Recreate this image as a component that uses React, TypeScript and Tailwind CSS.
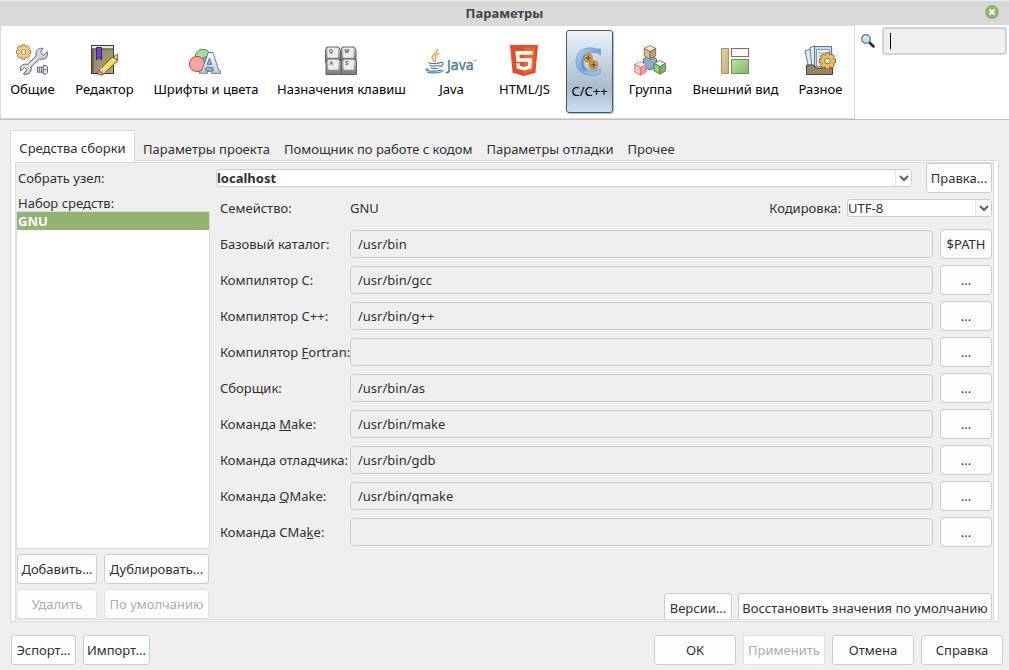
import React, { useState } from "react";

function Cog({ cx, cy, r, hole, fill, stroke }: { cx: number; cy: number; r: number; hole: number; fill: string; stroke: string }) {
  const teeth = 8;
  const pts: string[] = [];
  for (let i = 0; i < teeth; i++) {
    const base = (i / teeth) * Math.PI * 2;
    const steps: [number, number][] = [[-0.34, r * 0.76], [-0.22, r], [0.22, r], [0.34, r * 0.76]];
    steps.forEach(([a, d]) => pts.push(`${(cx + Math.cos(base + a) * d).toFixed(2)},${(cy + Math.sin(base + a) * d).toFixed(2)}`));
  }
  return (
    <g>
      <polygon points={pts.join(" ")} fill={fill} stroke={stroke} strokeWidth="1" strokeLinejoin="round" />
      <circle cx={cx} cy={cy} r={hole} fill="#fff" stroke={stroke} strokeWidth="1" />
    </g>
  );
}

function GeneralIcon() {
  return (
    <svg width="32" height="32" viewBox="0 0 32 32" aria-hidden="true">
      <defs>
        <linearGradient id="wrench" x1="0" y1="0" x2="1" y2="1">
          <stop offset="0" stopColor="#fbfcfd" />
          <stop offset="1" stopColor="#aab4be" />
        </linearGradient>
      </defs>
      <Cog cx={7.5} cy={8} r={7.4} hole={2.4} fill="#f2cd88" stroke="#b67f33" />
      <path d="M27 4.4C23.6 3.600 19.800 5.800 20 10L20.200 12 11.800 20.300 9.500 20.200C6 20 3.600 23 4.600 27L8.300 23.600 10.900 25.700 7.400 29.900C11.500 31.500 15.600 28.300 15.200 24.200L15.100 23 23.600 15 26 15.200C30.200 15.400 32.500 11.500 31.200 7.800L27.700 11.200 24.500 8.300Z" fill="url(#wrench)" stroke="#5c6670" strokeWidth="1" strokeLinejoin="round" />
      <path d="M12.500 22 22 12.800" stroke="#fff" strokeWidth="1" />
      <rect x="21.5" y="23.200" width="6" height="5" fill="#cfd6dd" stroke="#66717c" />
      <path d="M23.500 23v5M25.500 23v5" stroke="#7c8791" />
      <path d="M27.300 21.500h2.800l1.400 1.500v5.500l-1.400 1.500h-2.800z" fill="#dfe5ea" stroke="#5f6a75" />
      <path d="M27.500 25.600h4" stroke="#7c8791" />
    </svg>
  );
}

function EditorIcon() {
  return (
    <svg width="32" height="32" viewBox="0 0 32 32" aria-hidden="true">
      <defs>
        <linearGradient id="book" x1="0" y1="0" x2="1" y2="1">
          <stop offset="0" stopColor="#877f5e" />
          <stop offset="1" stopColor="#b0a881" />
        </linearGradient>
      </defs>
      <rect x="3.5" y="1.5" width="22" height="28" fill="url(#book)" stroke="#423a25" />
      <path d="M4 2h21v2.5H4z" fill="#e8e8e0" />
      <path d="M3.5 5h22" stroke="#5c5238" />
      <path d="M5 5v24" stroke="#71694b" strokeWidth="2" />
      <path d="M8.5 3.5h5V16L11 13.2 8.5 16z" fill="#6e46c9" stroke="#371b83" />
      <path d="M26.8 12.2 29.5 14.5 29 17.5 15.5 30 10.5 29.5 10.8 26.6 23 14z" fill="#f7cf52" stroke="#73521b" strokeLinejoin="round" />
      <path d="M14 27 26.3 15.2" stroke="#fff0a1" strokeWidth="1.6" />
      <path d="M10.5 26 15.5 30.2C13.5 31.8 9.5 31 9.5 28z" fill="#ef8f94" stroke="#9f3c42" />
      <path d="M12.5 24.5 17 28.6" stroke="#ccd2d8" strokeWidth="1.8" />
      <path d="m25 13.3 4.8-3.3-.8 5.8z" fill="#ecd0a1" stroke="#4d3518" strokeWidth=".7" />
    </svg>
  );
}

function FontsIcon() {
  return (
    <svg width="32" height="32" viewBox="0 0 32 32" aria-hidden="true">
      <defs>
        <linearGradient id="glyph" x1="0" y1="0" x2="0" y2="1">
          <stop offset="0" stopColor="#ffffff" />
          <stop offset="1" stopColor="#c4ccd4" />
        </linearGradient>
      </defs>
      <circle cx="14" cy="13" r="7.8" fill="#a8dc93" stroke="#4c9644" />
      <circle cx="19" cy="20" r="7.6" fill="#7cb2e0" stroke="#3e76ab" />
      <circle cx="8" cy="20" r="7.6" fill="#f8a5a1" stroke="#c2463f" />
      <path d="M10.5 29.3v-2.2l2.2-.5L19.3 8.5h4.6l6 18.1 1.9.5v2.2h-9.2v-2.2l2-.5-1.1-3.4h-6.2l-1.2 3.4 2.3.5v2.2zM18.2 20.4h4.4L20.5 14z" fill="url(#glyph)" stroke="#5d7082" strokeWidth=".9" fillRule="evenodd" />
    </svg>
  );
}

function KeysIcon() {
  const keys = [
    { x: 0, y: 3, c: "Q" },
    { x: 15.5, y: 3, c: "W" },
    { x: 0.5, y: 15, c: "A" },
    { x: 16, y: 15, c: "S" },
  ];
  return (
    <svg width="32" height="32" viewBox="0 0 32 32" aria-hidden="true">
      <defs>
        <linearGradient id="key" x1="0" y1="0" x2="0" y2="1">
          <stop offset="0" stopColor="#c9c9cc" />
          <stop offset="1" stopColor="#77787b" />
        </linearGradient>
      </defs>
      {keys.map((k) => (
        <g key={k.c}>
          <path d={`M${k.x + 2} ${k.y}h11.500l2 3v12.500h-15v-12.500z`} fill="url(#key)" stroke="#606164" strokeLinejoin="round" />
          <rect x={k.x + 2.6} y={k.y + 0.8} width="10.4" height="10" rx="1" fill="#ececee" />
          <text x={k.x + 4} y={k.y + 6.4} fontSize="5" fontWeight="700" fontFamily="Liberation Sans, sans-serif" fill="#56575a">{k.c}</text>
        </g>
      ))}
    </svg>
  );
}

function JavaIcon() {
  return (
    <svg width="52" height="32" viewBox="0 0 52 32" aria-hidden="true">
      <path d="M12.200 5.500c1 3.200-5.100 4.900-5.100 8 0 1.800 1.300 2.600 2.200 4.100M14 9.500c-3.400 1.300-5 2.700-3.500 4.600 1 1.400.5 2.300-.5 3.500" fill="none" stroke="#ef9430" strokeWidth="1.300" strokeLinecap="round" />
      <path d="M4.200 18.500c-1.800 1.300 8 1.400 11.200.1M5 21.200c.8 1.200 6.600 1.100 9.200.1M6 23.800c1.200 1 5 1 7.200.2M14.800 18.600c4.500-1.200 4.200 3-.1 4.100M3.200 24.800c-7 1.800 4.400 3.300 12.700 1.600M2.800 28.300c7 1 13.400.3 15.200-1.600" fill="none" stroke="#557fa2" strokeWidth="1.200" strokeLinecap="round" />
      <text x="22" y="26" fontSize="14" fontFamily="Noto Sans, sans-serif" fill="#4f7d9f" stroke="#4f7d9f" strokeWidth=".4">Java</text>
      <path d="M49 16.500h2.500" stroke="#7fa0b8" />
    </svg>
  );
}

function HtmlIcon() {
  return (
    <svg width="32" height="32" viewBox="0 0 32 32" aria-hidden="true">
      <path d="M2 1h28l-2.6 27.8L16 32 4.6 28.8z" fill="#e44d26" />
      <path d="M16 3.3h11.5l-2.2 23.8L16 29.7z" fill="#f16529" />
      <path d="M7.3 7h17.5l-.3 3.8H11.4l.3 3.4h12.5l-1 10.3L16 26.6l-7.2-2.1-.5-5.2h3.5l.3 2.5 3.9 1.1 3.9-1.1.5-4H8.4z" fill="#fff" />
    </svg>
  );
}

function CppIcon() {
  return (
    <svg width="32" height="32" viewBox="0 0 32 32" aria-hidden="true">
      <defs>
        <linearGradient id="cring" x1="0" y1="0" x2="1" y2="1">
          <stop offset="0" stopColor="#b5d8fb" />
          <stop offset=".5" stopColor="#73a5da" />
          <stop offset="1" stopColor="#a4cdf5" />
        </linearGradient>
        <radialGradient id="gold">
          <stop offset="0" stopColor="#ffda7e" />
          <stop offset="1" stopColor="#bf7824" />
        </radialGradient>
      </defs>
      <path d="M27.500 3.800v6l-2.200-1.300C21 6.200 10.500 7.500 10.500 17c0 9.500 10.300 10.300 14.800 7.600l1.900-.9v4.800C16.500 33 3 29.200 3 16.800 3 4.400 15 .5 24 4.200z" fill="url(#cring)" stroke="#6d9fd3" strokeWidth=".8" />
      <path d="M11.800 9.800C8 14.500 8 21.500 13 25.500" fill="none" stroke="#4d7db5" strokeWidth="1" />
      <circle cx="15.300" cy="13" r="4.600" fill="url(#gold)" />
      <circle cx="20.500" cy="20" r="4.800" fill="url(#gold)" />
      <path d="M12.800 13h5M15.300 10.500v5M17.800 20h5.400M20.500 17.300v5.400" stroke="#442810" strokeWidth="1.100" />
    </svg>
  );
}

function Cube({ x, y, top, left, right, stroke }: { x: number; y: number; top: string; left: string; right: string; stroke: string }) {
  return (
    <g transform={`translate(${x} ${y})`} stroke={stroke} strokeWidth=".8" strokeLinejoin="round">
      <path d="M6.2.5 12 3.4 6.4 6.6.5 3.4z" fill={top} />
      <path d="M.5 3.4 6.4 6.6v7.6L.5 11z" fill={left} />
      <path d="M12 3.4 6.4 6.6v7.6L12 11z" fill={right} />
    </g>
  );
}

function TeamIcon() {
  return (
    <svg width="32" height="32" viewBox="0 0 32 32" aria-hidden="true">
      <path d="M9.5 15 16 11l6.5 4v8L16 26l-6.5-3z" fill="#86add5" stroke="#426f9f" />
      <Cube x={9.7} y={1} top="#f5ead7" left="#d9c092" right="#c0a06b" stroke="#806234" />
      <Cube x={0.2} y={17} top="#fff0f0" left="#ffbcbc" right="#f39a9a" stroke="#d96a6a" />
      <Cube x={19.5} y={16} top="#f2faea" left="#97cc78" right="#7cb660" stroke="#477c31" />
    </svg>
  );
}

function AppearanceIcon() {
  return (
    <svg width="32" height="32" viewBox="0 0 32 32" aria-hidden="true">
      <defs>
        <linearGradient id="tan" x1="0" y1="0" x2="1" y2="1">
          <stop offset="0" stopColor="#e6d3ae" />
          <stop offset="1" stopColor="#c8ac7c" />
        </linearGradient>
        <linearGradient id="green" x1="0" y1="0" x2="1" y2="1">
          <stop offset="0" stopColor="#bce2a8" />
          <stop offset="1" stopColor="#7fb865" />
        </linearGradient>
      </defs>
      <rect x="2.5" y="4.5" width="7" height="25" fill="url(#tan)" stroke="#b2904f" />
      <rect x="12.5" y="4.5" width="17" height="8" fill="#fff" stroke="#c4524d" />
      <rect x="12.5" y="15.5" width="17" height="14" fill="url(#green)" stroke="#5f9b4a" />
    </svg>
  );
}

function MiscIcon() {
  return (
    <svg width="32" height="32" viewBox="0 0 32 32" aria-hidden="true">
      <path d="m1 7 5-2 5 18-6 2z" fill="#dce7f1" stroke="#5e7b97" strokeLinejoin="round" />
      <path d="m6 3.500 5-1.500 4 20-7 2z" fill="#e6eef6" stroke="#5e7b97" strokeLinejoin="round" />
      <path d="M10.500 2.500h17v20h-17z" fill="#c9dcec" stroke="#557592" />
      <path d="M12.500 5.500h13v17h-13z" fill="#e3edf6" stroke="#7d98b1" />
      <path d="M15 9h8M15 12h8M15 15h6M15 18h6" stroke="#8fa6bc" />
      <path d="M2.500 21h7l2 3h17v6.500h-26z" fill="#948763" stroke="#4e4329" strokeLinejoin="round" />
      <Cog cx={23.5} cy={17} r={8.3} hole={2.8} fill="#f0bd63" stroke="#95611e" />
    </svg>
  );
}

const CATEGORIES = [
  { label: "Общие", icon: <GeneralIcon />, width: "w-[55px]" },
  { label: "Редактор", icon: <EditorIcon />, width: "w-[69px]" },
  { label: "Шрифты и цвета", icon: <FontsIcon />, width: "w-[114px]" },
  { label: "Назначения клавиш", icon: <KeysIcon />, width: "w-[137px]" },
  { label: "Java", icon: <JavaIcon />, width: "w-[63px]" },
  { label: "HTML/JS", icon: <HtmlIcon />, width: "w-[63px]" },
  { label: "C/C++", icon: <CppIcon />, width: "w-[47px]" },
  { label: "Группа", icon: <TeamIcon />, width: "w-[55px]" },
  { label: "Внешний вид", icon: <AppearanceIcon />, width: "w-[95px]" },
  { label: "Разное", icon: <MiscIcon />, width: "w-[55px]" },
];

const TABS = ["Параметры проекта", "Помощник по работе с кодом", "Параметры отладки", "Прочее"];

const TOOLS: { id: string; label: React.ReactNode; value: string; action: string }[] = [
  { id: "base", label: "Базовый каталог:", value: "/usr/bin", action: "$PATH" },
  { id: "cc", label: "Компилятор C:", value: "/usr/bin/gcc", action: "..." },
  { id: "cxx", label: "Компилятор C++:", value: "/usr/bin/g++", action: "..." },
  { id: "fortran", label: <>Компилятор <u>F</u>ortran:</>, value: "", action: "..." },
  { id: "as", label: "Сборщик:", value: "/usr/bin/as", action: "..." },
  { id: "make", label: <>Команда <u>M</u>ake:</>, value: "/usr/bin/make", action: "..." },
  { id: "gdb", label: "Команда отладчика:", value: "/usr/bin/gdb", action: "..." },
  { id: "qmake", label: <>Команда <u>Q</u>Make:</>, value: "/usr/bin/qmake", action: "..." },
  { id: "cmake", label: <>Команда CMa<u>k</u>e:</>, value: "", action: "..." },
];

function Button({ children, className = "", disabled = false }: { children: React.ReactNode; className?: string; disabled?: boolean }) {
  return (
    <button
      type="button"
      disabled={disabled}
      className={`h-[30px] shrink-0 whitespace-nowrap rounded-[3px] border border-[#cdcdcd] bg-[#fcfefd] text-center disabled:border-[#e2e2e2] disabled:text-[#adadad] ${className}`}
    >
      {children}
    </button>
  );
}

function Combo({ id, value, className = "", bold = false }: { id: string; value: string; className?: string; bold?: boolean }) {
  return (
    <div className={`relative h-[18px] ${className}`}>
      <select
        id={id}
        className={`block h-[18px] w-full appearance-none rounded-[3px] border border-[#cdcdcd] bg-white pr-5 leading-4 ${bold ? "font-bold" : ""}`}
      >
        <option>{value}</option>
      </select>
      <span className="pointer-events-none absolute inset-y-px right-px flex w-4 items-center justify-center border-l border-[#e4e4e4] bg-[#fcfefd]">
        <svg width="10" height="7" viewBox="0 0 10 7" aria-hidden="true">
          <path d="M1 1l4 4 4-4" fill="none" stroke="#5f6164" strokeWidth="2" />
        </svg>
      </span>
    </div>
  );
}

export default function App() {
  const [selected, setSelected] = useState("C/C++");
  return (
    <div className="flex min-h-screen flex-col bg-[#efefef] font-['Noto_Sans',sans-serif] text-[13px] leading-4 text-[#303030]">
      <header className="relative flex h-[25px] items-center justify-center border-t border-[#efefef] bg-[#d9d9d9]">
        <h1 className="font-bold text-[#454545]">Параметры</h1>
        <button type="button" aria-label="Закрыть" className="absolute right-2.5 top-1">
          <svg width="14" height="14" viewBox="0 0 14 14" className="block">
            <circle cx="7" cy="7" r="7" fill="#92b372" />
            <path d="M4.500 4.500l5 5M9.500 4.500l-5 5" stroke="#fff" strokeWidth="2" />
          </svg>
        </button>
      </header>

      <div className="flex border-b border-[#bfbfbf] bg-white">
        <nav className="flex h-[94px] gap-2.5 border border-[#d9d9d9] py-1 pl-1 pr-1.5">
          {CATEGORIES.map((c) => {
            const on = c.label === selected;
            return (
              <button
                key={c.label}
                type="button"
                aria-pressed={on}
                onClick={() => setSelected(c.label)}
                className={`flex h-[83px] shrink-0 flex-col items-center whitespace-nowrap rounded-[3px] text-black [&>svg]:mr-0.5 ${c.width} ${
                  on
                    ? "gap-1.5 border border-[#3d5a73] bg-linear-to-b from-[#eef2f9] via-[#a9bccd] via-70% to-[#c8dff5] pt-3.5 shadow-[1px_1px_1px_#b5bcc4]"
                    : "gap-[5px] pt-3.5"
                }`}
              >
                {c.icon}
                <span>{c.label}</span>
              </button>
            );
          })}
        </nav>
        <div className="flex min-w-0 flex-1 items-start gap-[7px] pl-1.5 pr-0.5 pt-0.5">
          <label htmlFor="search" className="pt-[7px]" aria-label="Поиск">
            <svg width="14" height="14" viewBox="0 0 14 14" className="block" aria-hidden="true">
              <path d="M8.500 8.500l4 4" stroke="#272727" strokeWidth="2.500" strokeLinecap="round" />
              <circle cx="5" cy="5" r="4.300" fill="#c4e1f5" stroke="#5b7086" strokeWidth="1.200" />
              <path d="M2.800 4.800a2.300 2.300 0 0 1 2.400-2.200" fill="none" stroke="#fff" strokeWidth="1.200" />
            </svg>
          </label>
          <div className="relative min-w-0 flex-1">
            <input id="search" type="text" className="block h-7 w-full rounded-[4px] border-2 border-[#d3d3d3] bg-[#efefef] px-1.5 outline-none" />
            <span className="pointer-events-none absolute left-2 top-1.5 h-4 w-px bg-black" />
          </div>
        </div>
      </div>

      <main className="flex flex-1 flex-col px-[10px] pt-2.5">
        <div role="tablist" className="flex items-end">
          <button role="tab" aria-selected="true" type="button" className="relative z-10 -mb-px mr-px h-[31px] w-[125px] whitespace-nowrap border border-b-0 border-[#dadada] bg-white pt-1">
            Средства сборки
          </button>
          {TABS.map((t) => (
            <button key={t} role="tab" aria-selected="false" type="button" className="h-[30px] whitespace-nowrap px-[7px] pt-2">
              {t}
            </button>
          ))}
        </div>

        <section className="flex flex-1 flex-col border border-[#dadada] bg-white px-1 py-px">
          <div className="flex flex-1 flex-col overflow-hidden border border-[#dadada] bg-[#efefef] pr-px">
            <div className="flex h-[30px] items-center pl-0.5">
              <label htmlFor="host" className="w-[198px] shrink-0">Собрать узел:</label>
              <Combo id="host" value="localhost" bold className="min-w-0 flex-1" />
              <Button className="ml-[14px] w-[66px]">Правка...</Button>
            </div>

            <div className="flex flex-1">
              <div className="flex w-[194px] shrink-0 flex-col">
                <h2 className="pl-0.5 pt-0.5">Набор средств:</h2>
                <ul role="listbox" className="flex-1 border border-[#dadada] bg-white">
                  <li role="option" aria-selected="true" className="h-[18px] bg-[#92b372] pl-px leading-[18px] font-bold text-white">GNU</li>
                </ul>
                <div className="grid grid-cols-[80px_105px] gap-x-[7px] gap-y-[5px] pl-px pt-[5px]">
                  <Button>Добавить...</Button>
                  <Button>Дублировать...</Button>
                  <Button disabled>Удалить</Button>
                  <Button disabled>По умолчанию</Button>
                </div>
              </div>

              <div className="flex min-w-0 flex-1 flex-col pl-2.5">
                <div className="flex h-[30px] items-center">
                  <span className="w-[130px] shrink-0">Семейство:</span>
                  <span className="flex-1">GNU</span>
                  <label htmlFor="encoding" className="mr-1.5">Кодировка:</label>
                  <Combo id="encoding" value="UTF-8" className="w-[145px]" />
                </div>
                <div className="flex flex-col gap-1.5 pt-1.5">
                  {TOOLS.map((t) => (
                    <div key={t.id} className="flex h-[30px] items-center">
                      <label htmlFor={t.id} className="w-[130px] shrink-0 whitespace-nowrap">{t.label}</label>
                      <input id={t.id} type="text" readOnly defaultValue={t.value} className="h-7 min-w-0 flex-1 rounded-[4px] border border-[#cdcdcd] bg-[#efefef] px-[7px] outline-none" />
                      <Button className="ml-[7px] w-[52px]">{t.action}</Button>
                    </div>
                  ))}
                </div>
                <div className="mt-auto flex h-[26px] justify-end gap-1.5 overflow-hidden">
                  <Button className="w-[68px]">Версии...</Button>
                  <Button className="w-[254px]">Восстановить значения по умолчанию</Button>
                </div>
              </div>
            </div>
          </div>
        </section>
      </main>

      <footer className="flex gap-[7px] pb-[5px] pl-[11px] pr-1.5 pt-[13px]">
        <Button className="w-[65px]">Эспорт...</Button>
        <Button className="w-[67px]">Импорт...</Button>
        <div className="flex flex-1 justify-end gap-[7px]">
          <Button className="w-[82px]">OK</Button>
          <Button disabled className="w-[82px]">Применить</Button>
          <Button className="w-[82px]">Отмена</Button>
          <Button className="w-[82px]">Справка</Button>
        </div>
      </footer>
    </div>
  );
}
